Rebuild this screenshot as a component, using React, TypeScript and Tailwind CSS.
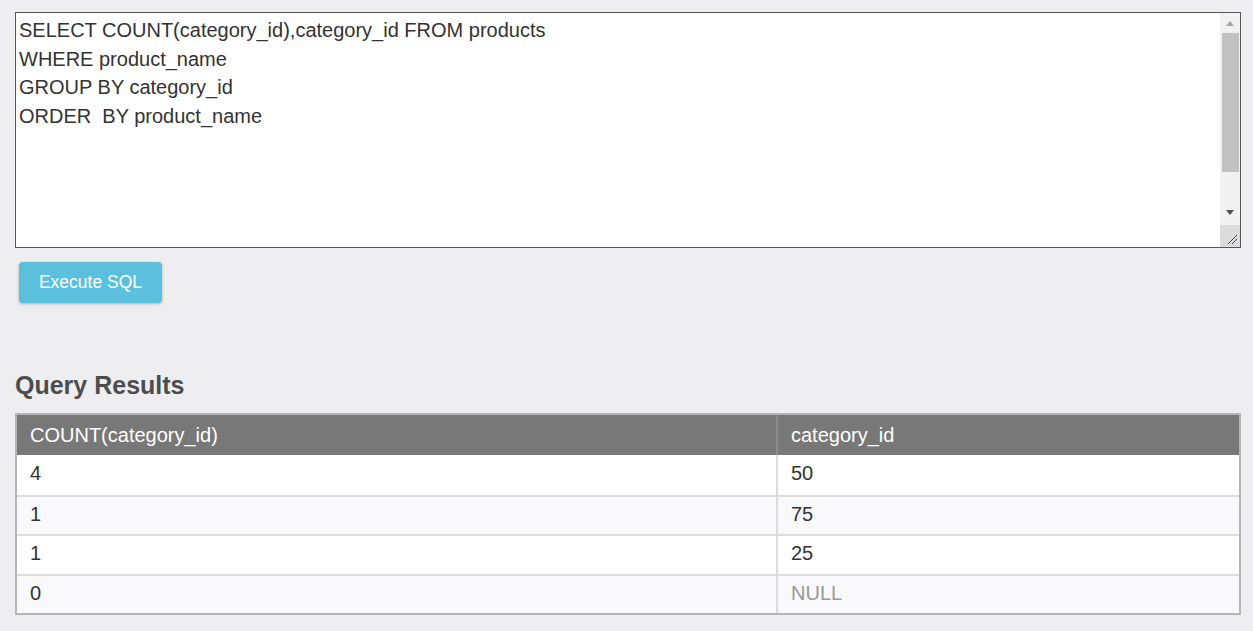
import React, { useState } from "react";

const rows: { count: string; categoryId: string | null }[] = [
    { count: "4", categoryId: "50" },
    { count: "1", categoryId: "75" },
    { count: "1", categoryId: "25" },
    { count: "0", categoryId: null },
];

const initialSql = "SELECT COUNT(category_id),category_id FROM products\nWHERE product_name\nGROUP BY category_id\nORDER  BY product_name";

// Fake classic scrollbar, the headless browser hides the native one
function ScrollBar() {
    return (
        <div className="w-[20px] flex flex-col bg-[#f1f1f1]">
            <div className="h-[20px] flex items-center justify-center">
                <svg width="8" height="5" viewBox="0 0 8 5"><path d="M0 5 L4 0 L8 5 Z" fill="#a3a3a3" /></svg>
            </div>
            <div className="h-[139px] ml-[2px] mr-[1px] bg-[#c1c1c1]" />
            <div className="flex-1" />
            <div className="h-[19px] flex items-center justify-center">
                <svg width="8" height="5" viewBox="0 0 8 5"><path d="M0 0 L8 0 L4 5 Z" fill="#505050" /></svg>
            </div>
            <div className="h-[3px]" />
            <div className="h-[22px] bg-[#dcdcdc] flex items-end justify-end">
                <svg width="12" height="12" viewBox="0 0 12 12" className="mb-[2px] mr-[2px]">
                    <path d="M2 11 L11 2 M6 11 L11 6" stroke="#444" strokeWidth="1" />
                </svg>
            </div>
        </div>
    );
}

export default function App() {
    const [sql, setSql] = useState(initialSql);

    return (
        <div className="min-h-screen bg-[#eeeef0] px-[15px] pt-[12px] pb-4 text-[#333]" style={{ fontFamily: '"Liberation Sans", Arial, sans-serif' }}>
            <div className="flex w-[1226px] h-[236px] bg-white border border-[#555]">
                <textarea
                    value={sql}
                    onChange={(e) => setSql(e.target.value)}
                    spellCheck={false}
                    className="flex-1 h-full bg-white px-[3px] pt-[3px] text-[20px] leading-[28.5px] text-[#333] overflow-hidden resize-none focus:outline-none"
                    style={{ fontFamily: '"Liberation Sans", Arial, sans-serif' }}
                />
                <ScrollBar />
            </div>

            <button className="mt-[14px] ml-[4px] h-[41px] w-[143px] rounded-[4px] bg-[#5bc0de] text-white text-[17.5px] shadow-[0_1px_3px_rgba(0,0,0,0.25)]">
                Execute SQL
            </button>

            {/* Results */}
            <h2 className="mt-[67px] text-[25px] font-bold leading-[30px] text-[#4d4d4d]">Query Results</h2>

            <div className="mt-[13px] w-[1226px] border-2 border-[#b5b5b5] text-[20px]">
                <div className="flex h-[40px] bg-[#787878] text-white">
                    <div className="w-[761px] flex items-center pl-[13px] pb-[1px] border-r-2 border-[#8a8a8a]">COUNT(category_id)</div>
                    <div className="flex-1 flex items-center pl-[13px] pb-[1px]">category_id</div>
                </div>
                {rows.map((row, i) => (
                    <div key={i} className={`flex h-[39.5px] ${i > 0 ? "border-t-2 border-[#dcdcdc]" : ""} ${i % 2 === 1 ? "bg-[#f9f9fb]" : "bg-white"}`}>
                        <div className="w-[761px] flex items-center pl-[13px] pb-[3px] border-r-2 border-[#dcdcdc]">{row.count}</div>
                        <div className={`flex-1 flex items-center pl-[13px] pb-[3px] ${row.categoryId === null ? "text-[#999]" : ""}`}>
                            {row.categoryId ?? "NULL"}
                        </div>
                    </div>
                ))}
            </div>
        </div>
    );
}
